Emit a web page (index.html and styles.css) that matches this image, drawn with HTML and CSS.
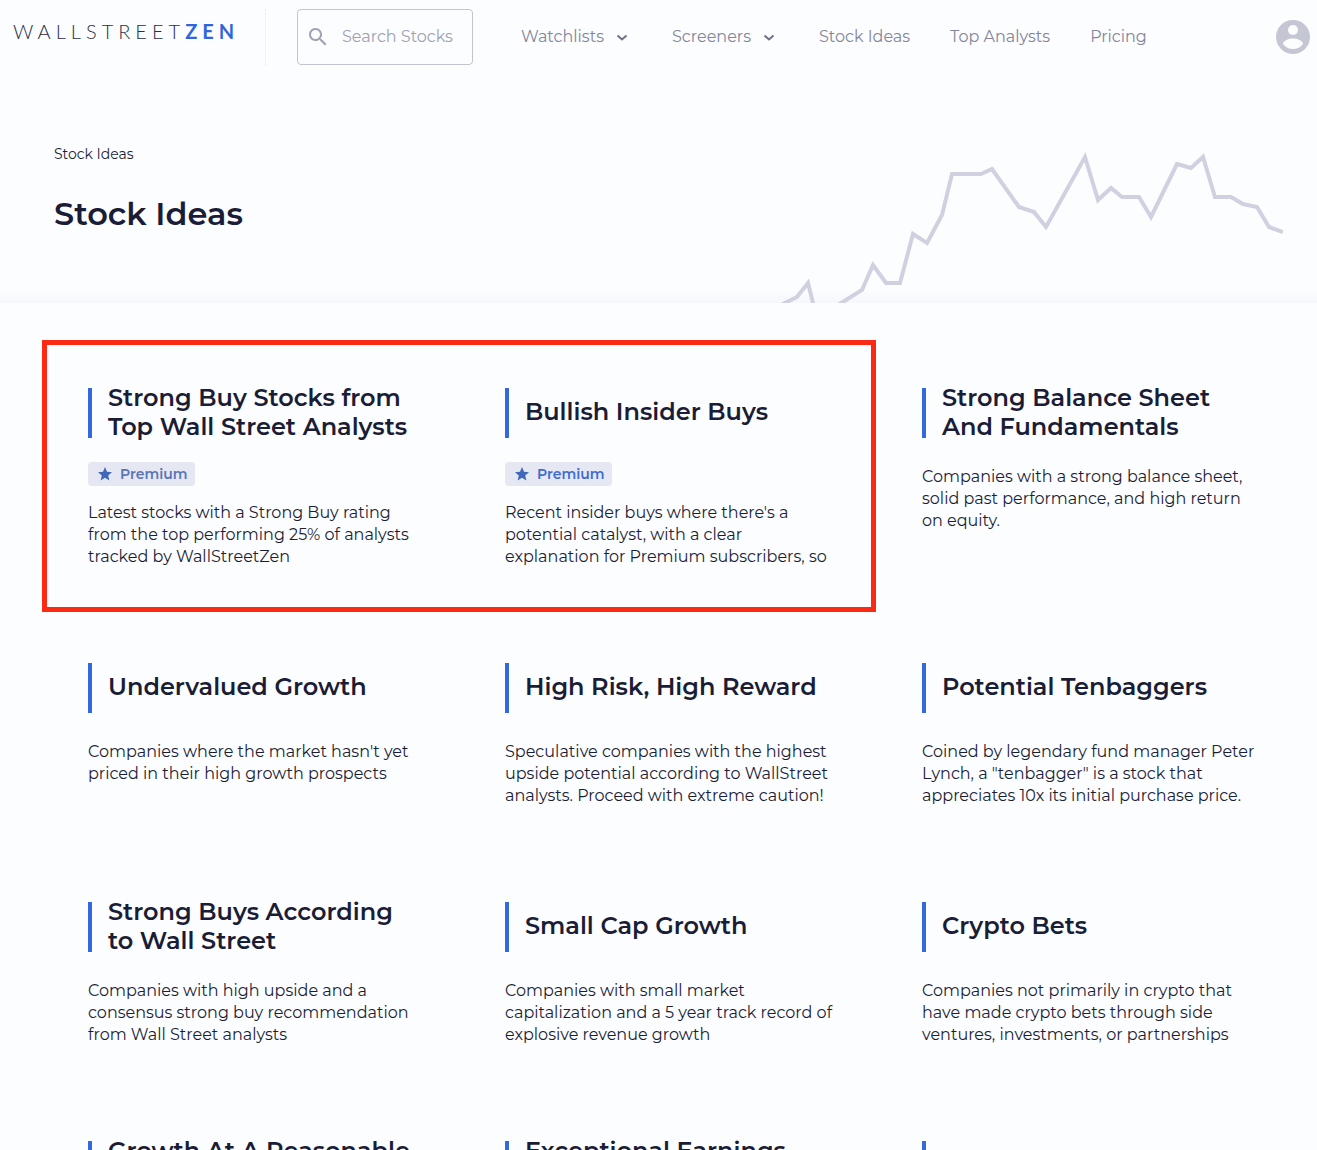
FILE: index.html
```html
<!DOCTYPE html>
<html lang="en">
<head>
<meta charset="utf-8">
<meta name="viewport" content="width=device-width, initial-scale=1">
<title>Stock Ideas - WallStreetZen</title>
<link rel="stylesheet" href="styles.css">
</head>
<body>
<header class="header">
  <a class="logo" href="#">WALLSTREET<b class="logo-accent">ZEN</b></a>
  <label class="search">
    <svg class="search-icon" viewBox="0 0 24 24" aria-hidden="true"><path d="M15.5 14h-.79l-.28-.27C15.41 12.59 16 11.11 16 9.500 16 5.910 13.090 3 9.500 3S3 5.910 3 9.500 5.910 16 9.500 16c1.610 0 3.090-.59 4.230-1.570l.27.28v.79l5 4.990L20.490 19l-4.990-5zm-6 0C7.010 14 5 11.990 5 9.500S7.010 5 9.500 5 14 7.010 14 9.500 11.990 14 9.500 14z"/></svg>
    <input class="search-input" type="text" placeholder="Search Stocks" aria-label="Search Stocks">
  </label>
  <nav class="nav">
    <button class="nav-item" type="button">Watchlists<svg class="chevron" viewBox="0 0 20 20" aria-hidden="true"><path d="M5.500 8.500l4.500 4 4.500-4"/></svg></button>
    <button class="nav-item" type="button">Screeners<svg class="chevron" viewBox="0 0 20 20" aria-hidden="true"><path d="M5.500 8.500l4.500 4 4.500-4"/></svg></button>
    <a class="nav-item" href="#">Stock Ideas</a>
    <a class="nav-item" href="#">Top Analysts</a>
    <a class="nav-item" href="#">Pricing</a>
  </nav>
  <button class="account" type="button" aria-label="Account">
    <svg class="account-icon" viewBox="0 0 34 34" aria-hidden="true"><circle cx="17" cy="17" r="17" fill="#c5c6d4"/><circle cx="17" cy="10" r="5" fill="#fcfdff"/><path d="M7 24c0-3.500 6-5.500 10-5.500s10 2 10 5.500c-2 3-6 5-10 5s-8-2-10-5z" fill="#fcfdff"/></svg>
  </button>
</header>
<section class="hero">
  <div class="hero-text">
    <a class="breadcrumb" href="#">Stock Ideas</a>
    <h1 class="hero-title">Stock Ideas</h1>
  </div>
  <svg class="hero-chart" viewBox="780 150 503 153" aria-hidden="true">
    <path d="M781 305L797 297 808 283 814 307M838 305L862 290 873 265 886 283 900 283 913 234 927 243 942 215 952 174 981 174 992 169 1019 207 1034 212 1046 227 1085 157 1098 200 1111 188 1122 197 1139 197 1151 217 1177 164 1191 168 1203 157 1215 197 1231 197 1243 204 1257 207 1269 227 1283 232"/>
  </svg>
</section>
<main class="ideas">
  <div class="highlight"></div>
  <article class="card card-1">
    <h2 class="card-title"><a href="#">Strong Buy Stocks from<br>Top Wall Street Analysts</a></h2>
    <span class="badge"><svg class="star" viewBox="0 0 14 14" aria-hidden="true"><path d="M7 0l2 4.800 5 .4-3.800 3.300 1.200 5L7 10.800 2.600 13.500l1.200-5L0 5.200l5-.4z"/></svg>Premium</span>
    <p class="card-text">Latest stocks with a Strong Buy rating<br>from the top performing 25% of analysts<br>tracked by WallStreetZen</p>
  </article>
  <article class="card card-2">
    <h2 class="card-title"><a href="#">Bullish Insider Buys</a></h2>
    <span class="badge badge-bright"><svg class="star" viewBox="0 0 14 14" aria-hidden="true"><path d="M7 0l2 4.800 5 .4-3.800 3.300 1.200 5L7 10.800 2.600 13.500l1.200-5L0 5.200l5-.4z"/></svg>Premium</span>
    <p class="card-text">Recent insider buys where there's a<br>potential catalyst, with a clear<br>explanation for Premium subscribers, so</p>
  </article>
  <article class="card">
    <h2 class="card-title"><a href="#">Strong Balance Sheet<br>And Fundamentals</a></h2>
    <p class="card-text">Companies with a strong balance sheet,<br>solid past performance, and high return<br>on equity.</p>
  </article>
  <article class="card">
    <h2 class="card-title"><a href="#">Undervalued Growth</a></h2>
    <p class="card-text">Companies where the market hasn't yet<br>priced in their high growth prospects</p>
  </article>
  <article class="card">
    <h2 class="card-title"><a href="#">High Risk, High Reward</a></h2>
    <p class="card-text">Speculative companies with the highest<br>upside potential according to WallStreet<br>analysts. Proceed with extreme caution!</p>
  </article>
  <article class="card">
    <h2 class="card-title"><a href="#">Potential Tenbaggers</a></h2>
    <p class="card-text">Coined by legendary fund manager Peter<br>Lynch, a "tenbagger" is a stock that<br>appreciates 10x its initial purchase price.</p>
  </article>
  <article class="card">
    <h2 class="card-title"><a href="#">Strong Buys According<br>to Wall Street</a></h2>
    <p class="card-text">Companies with high upside and a<br>consensus strong buy recommendation<br>from Wall Street analysts</p>
  </article>
  <article class="card">
    <h2 class="card-title"><a href="#">Small Cap Growth</a></h2>
    <p class="card-text">Companies with small market<br>capitalization and a 5 year track record of<br>explosive revenue growth</p>
  </article>
  <article class="card">
    <h2 class="card-title"><a href="#">Crypto Bets</a></h2>
    <p class="card-text">Companies not primarily in crypto that<br>have made crypto bets through side<br>ventures, investments, or partnerships</p>
  </article>
  <article class="card">
    <h2 class="card-title"><a href="#">Growth At A Reasonable<br>Price</a></h2>
  </article>
  <article class="card">
    <h2 class="card-title"><a href="#">Exceptional Earnings<br>Growth</a></h2>
  </article>
  <article class="card">
    <h2 class="card-title"></h2>
  </article>
</main>
</body>
</html>
```
FILE: styles.css
```css
* {
  box-sizing: border-box;
}

body {
  margin: 0;
  background: #fcfdff;
  color: #1b1d36;
  font: 16px/22px Montserrat, Inter, sans-serif;
}

a {
  color: inherit;
  text-decoration: none;
}

button {
  padding: 0;
  border: 0;
  background: none;
  color: inherit;
  font: inherit;
  cursor: pointer;
}

.header {
  display: flex;
  align-items: flex-start;
  padding: 9px 7px 15px 13px;
}

.logo {
  width: 253px;
  height: 56px;
  flex: none;
  border-right: 1px dotted #e4e6f2;
  color: #2b2d48;
  font: 300 20px/45px Lato, sans-serif;
  letter-spacing: 5px;
}

.logo-accent {
  color: #2f66de;
  font-weight: 700;
}

.search {
  display: flex;
  align-items: center;
  gap: 12px;
  width: 176px;
  height: 56px;
  margin-left: 31px;
  padding: 0 8px;
  border: 1px solid #c3c4d2;
  border-radius: 4px;
}

.search-icon {
  width: 24px;
  height: 24px;
  flex: none;
  fill: #a0a1b2;
}

.search-input {
  width: 100%;
  min-width: 0;
  padding: 0;
  border: 0;
  outline: 0;
  background: none;
  color: #1b1d36;
  font: inherit;
}

.search-input::placeholder {
  color: #a0a1b2;
  opacity: 1;
}

.nav {
  display: flex;
  align-items: center;
  gap: 40px;
  height: 56px;
  margin-left: 48px;
  color: #84859a;
}

.nav-item {
  display: flex;
  align-items: center;
  gap: 8px;
  white-space: nowrap;
}

.chevron {
  width: 20px;
  height: 20px;
  fill: none;
  stroke: #6f7086;
  stroke-width: 2;
}

.account {
  margin: 11px 0 0 auto;
}

.account-icon {
  display: block;
  width: 34px;
  height: 34px;
}

.hero {
  display: flex;
  align-items: flex-end;
  justify-content: space-between;
  height: 223px;
  padding: 0 34px 0 54px;
  background: linear-gradient(to top, #f5f7fd, #fcfdff 14px);
}

.hero-text {
  align-self: flex-start;
  padding-top: 63px;
}

.breadcrumb {
  font-size: 14px;
}

.hero-title {
  margin: 29px 0 0;
  font-size: 32px;
  font-weight: 600;
  line-height: 40px;
}

.hero-chart {
  width: 503px;
  height: 153px;
  fill: none;
  stroke: #d0d1e0;
  stroke-width: 4;
}

.ideas {
  display: grid;
  grid-template-columns: repeat(3, 1fr);
  padding: 37px 24px 0 42px;
}

.highlight {
  grid-column: 1 / 3;
  grid-row: 1;
  margin-bottom: 3px;
  border: 5px solid #fc2a14;
}

.card {
  padding: 48px 0 47px 46px;
}

.card-1 {
  grid-column: 1;
  grid-row: 1;
}

.card-2 {
  grid-column: 2;
  grid-row: 1;
}

.card-title {
  display: flex;
  align-items: center;
  height: 50px;
  margin: 0;
  padding: 0 0 3px 16px;
  border-left: 4px solid #3369dc;
  font-size: 24px;
  font-weight: 600;
  line-height: 29px;
  white-space: nowrap;
}

.badge {
  display: flex;
  align-items: center;
  gap: 8px;
  width: fit-content;
  height: 24px;
  margin-top: 24px;
  padding: 0 8px 1px 10px;
  border-radius: 4px;
  background: #e5e7f3;
  color: #5a75b4;
  font-size: 14px;
  font-weight: 600;
}

.badge-bright {
  color: #3f6cd0;
}

.star {
  width: 14px;
  height: 14px;
  fill: #4168b8;
}

.card-text {
  margin: 28px 0 0;
  white-space: nowrap;
}

.badge + .card-text {
  margin-top: 16px;
}
```
